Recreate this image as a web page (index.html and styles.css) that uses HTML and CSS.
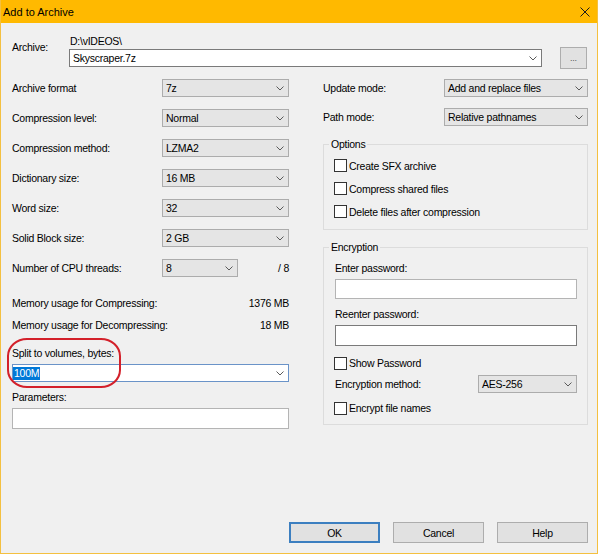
FILE: index.html
```html
<!DOCTYPE html>
<html>

<head>
    <title>Add to Archive</title>
    <link rel="stylesheet" href="styles.css">
</head>

<body>
    <div class="window">
        <div class="titleBar">
            <span class="titleText">Add to Archive</span>
            <svg class="closeIcon" width="10" height="10" viewBox="0 0 10 10">
                <path d="M0.5 0.5L9.5 9.5M9.5 0.5L0.5 9.5" stroke="#1a1a1a" stroke-width="1" fill="none" />
            </svg>
        </div>

        <div class="archiveRow">
            <div class="archiveLabel">Archive:</div>
            <div class="archiveFields">
                <div class="archivePath">D:\vIDEOS\</div>
                <div class="archiveInputRow">
                    <div class="combo editable archiveCombo">
                        <span class="comboText">Skyscraper.7z</span>
                        <svg class="chevron" width="8" height="5" viewBox="0 0 8 5"><path d="M0.5 0.5L4 4L7.5 0.5" /></svg>
                    </div>
                    <button class="winButton browseButton">...</button>
                </div>
            </div>
        </div>

        <div class="mainArea">
            <!-- Sol kolon -->
            <div class="leftColumn">
                <div class="formRow">
                    <span class="rowLabel">Archive format</span>
                    <div class="combo leftCombo"><span class="comboText">7z</span><svg class="chevron" width="8" height="5" viewBox="0 0 8 5"><path d="M0.5 0.5L4 4L7.5 0.5" /></svg></div>
                </div>
                <div class="formRow">
                    <span class="rowLabel">Compression level:</span>
                    <div class="combo leftCombo"><span class="comboText">Normal</span><svg class="chevron" width="8" height="5" viewBox="0 0 8 5"><path d="M0.5 0.5L4 4L7.5 0.5" /></svg></div>
                </div>
                <div class="formRow">
                    <span class="rowLabel">Compression method:</span>
                    <div class="combo leftCombo"><span class="comboText">LZMA2</span><svg class="chevron" width="8" height="5" viewBox="0 0 8 5"><path d="M0.5 0.5L4 4L7.5 0.5" /></svg></div>
                </div>
                <div class="formRow">
                    <span class="rowLabel">Dictionary size:</span>
                    <div class="combo leftCombo"><span class="comboText">16 MB</span><svg class="chevron" width="8" height="5" viewBox="0 0 8 5"><path d="M0.5 0.5L4 4L7.5 0.5" /></svg></div>
                </div>
                <div class="formRow">
                    <span class="rowLabel">Word size:</span>
                    <div class="combo leftCombo"><span class="comboText">32</span><svg class="chevron" width="8" height="5" viewBox="0 0 8 5"><path d="M0.5 0.5L4 4L7.5 0.5" /></svg></div>
                </div>
                <div class="formRow">
                    <span class="rowLabel">Solid Block size:</span>
                    <div class="combo leftCombo"><span class="comboText">2 GB</span><svg class="chevron" width="8" height="5" viewBox="0 0 8 5"><path d="M0.5 0.5L4 4L7.5 0.5" /></svg></div>
                </div>
                <div class="formRow">
                    <span class="rowLabel">Number of CPU threads:</span>
                    <div class="combo cpuCombo"><span class="comboText">8</span><svg class="chevron" width="8" height="5" viewBox="0 0 8 5"><path d="M0.5 0.5L4 4L7.5 0.5" /></svg></div>
                    <span class="cpuMax">/ 8</span>
                </div>

                <div class="memoryBlock">
                    <div class="memoryRow"><span>Memory usage for Compressing:</span><span>1376 MB</span></div>
                    <div class="memoryRow"><span>Memory usage for Decompressing:</span><span>18 MB</span></div>
                </div>

                <div class="splitBlock">
                    <div class="fieldLabel">Split to volumes, bytes:</div>
                    <div class="combo editable focused splitCombo">
                        <span class="selectedText">100M</span>
                        <svg class="chevron" width="8" height="5" viewBox="0 0 8 5"><path d="M0.5 0.5L4 4L7.5 0.5" /></svg>
                    </div>
                    <div class="redMark"></div>
                </div>

                <div class="fieldLabel paramsLabel">Parameters:</div>
                <input class="textField paramsField" type="text">
            </div>

            <!-- Sağ kolon -->
            <div class="rightColumn">
                <div class="formRow rightRow">
                    <span class="rightLabel">Update mode:</span>
                    <div class="combo rightCombo"><span class="comboText">Add and replace files</span><svg class="chevron" width="8" height="5" viewBox="0 0 8 5"><path d="M0.5 0.5L4 4L7.5 0.5" /></svg></div>
                </div>
                <div class="formRow rightRow pathRow">
                    <span class="rightLabel">Path mode:</span>
                    <div class="combo rightCombo"><span class="comboText">Relative pathnames</span><svg class="chevron" width="8" height="5" viewBox="0 0 8 5"><path d="M0.5 0.5L4 4L7.5 0.5" /></svg></div>
                </div>

                <div class="groupBox optionsGroup">
                    <div class="groupTitle">Options</div>
                    <div class="optionsList">
                        <div class="checkRow"><span class="checkBox"></span><span>Create SFX archive</span></div>
                        <div class="checkRow"><span class="checkBox"></span><span>Compress shared files</span></div>
                        <div class="checkRow"><span class="checkBox"></span><span>Delete files after compression</span></div>
                    </div>
                </div>

                <div class="groupBox encryptionGroup">
                    <div class="groupTitle">Encryption</div>
                    <div class="encryptionBody">
                        <div class="fieldLabel passLabel">Enter password:</div>
                        <input class="textField passField" type="password">
                        <div class="fieldLabel passLabel reenterLabel">Reenter password:</div>
                        <input class="textField passField hovered" type="password">
                        <div class="checkRow showRow"><span class="checkBox"></span><span>Show Password</span></div>
                        <div class="methodRow">
                            <span class="methodLabel">Encryption method:</span>
                            <div class="combo methodCombo"><span class="comboText">AES-256</span><svg class="chevron" width="8" height="5" viewBox="0 0 8 5"><path d="M0.5 0.5L4 4L7.5 0.5" /></svg></div>
                        </div>
                        <div class="checkRow namesRow"><span class="checkBox"></span><span>Encrypt file names</span></div>
                    </div>
                </div>
            </div>
        </div>

        <div class="footer">
            <button class="winButton dialogButton defaultButton">OK</button>
            <button class="winButton dialogButton">Cancel</button>
            <button class="winButton dialogButton">Help</button>
        </div>
    </div>
</body>

</html>
```

FILE: styles.css
```css
* {
    box-sizing: border-box;
}

body {
    margin: 0;
    background-color: #ffffff;
    font-family: "Liberation Sans", Arial, sans-serif;
    font-size: 10.5px;
    letter-spacing: -0.25px;
    color: #000000;
}

.window {
    width: 598px;
    height: 554px;
    display: flex;
    flex-direction: column;
    background-color: #f0f0f0;
    border: 1px solid #f4c040;
    border-top: none;
}

.titleBar {
    height: 23px;
    display: flex;
    align-items: center;
    justify-content: space-between;
    padding: 1px 7px 0 2px;
    background-color: #ffb900;
}

.titleText {
    font-size: 11px;
    letter-spacing: 0;
}

.archiveRow {
    display: flex;
    padding: 12px 0 0 11px;
}

.archiveLabel {
    width: 57px;
    margin-top: 6px;
    line-height: 12px;
}

.archivePath {
    line-height: 12px;
    padding-left: 1px;
}

.archiveInputRow {
    display: flex;
    align-items: center;
}

.combo {
    height: 18px;
    display: flex;
    align-items: center;
    padding: 0 4px 0 3px;
    background-color: #e5e5e5;
    border: 1px solid #acacac;
    white-space: nowrap;
}

.combo.editable {
    background-color: #ffffff;
    border-color: #7a7a7a;
}

.combo.focused {
    border-color: #6a93c8;
    padding-left: 0;
}

.chevron {
    margin-left: auto;
    flex-shrink: 0;
}

.chevron path {
    stroke: #5a5a5a;
    stroke-width: 1;
    fill: none;
}

.archiveCombo {
    width: 473px;
}

.winButton {
    font-family: inherit;
    font-size: inherit;
    letter-spacing: inherit;
    color: #000000;
    background-color: #e1e1e1;
    border: 1px solid #adadad;
    padding: 0;
}

.browseButton {
    width: 27px;
    height: 22px;
    margin-left: 18px;
    color: #555555;
    font-size: 9px;
}

.mainArea {
    display: flex;
    align-items: flex-start;
    padding-left: 11px;
    margin-top: 10px;
}

.leftColumn {
    width: 277px;
}

.formRow {
    display: flex;
    align-items: center;
    height: 18px;
    margin-bottom: 12px;
}

.rowLabel {
    width: 150px;
}

.leftCombo {
    width: 127px;
}

.cpuCombo {
    width: 76px;
}

.cpuMax {
    margin-left: auto;
}

.memoryBlock {
    margin-top: 15px;
}

.memoryRow {
    height: 22px;
    display: flex;
    align-items: center;
    justify-content: space-between;
}

.fieldLabel {
    line-height: 12px;
}

.splitBlock {
    position: relative;
    margin-top: 11px;
}

.splitCombo {
    margin-top: 5px;
}

.selectedText {
    line-height: 13px;
    padding: 0 1px;
    background-color: #0078d7;
    color: #ffffff;
}

.redMark {
    position: absolute;
    left: -5px;
    top: -9px;
    width: 114px;
    height: 50px;
    border: 2px solid #d3202a;
    border-radius: 20px / 18px;
}

.paramsLabel {
    margin-top: 9px;
}

.textField {
    display: block;
    margin: 0;
    padding: 0;
    background-color: #ffffff;
    border: 1px solid #b4b4b4;
    outline: none;
}

.paramsField {
    width: 277px;
    height: 21px;
    margin-top: 5px;
}

.rightColumn {
    width: 265px;
    margin-left: 34px;
}

.rightLabel {
    width: 121px;
}

.rightCombo {
    width: 144px;
}

.rightRow {
    margin-bottom: 11px;
}

.pathRow {
    margin-bottom: 0;
}

.groupBox {
    border: 1px solid #dcdcdc;
}

.groupTitle {
    width: fit-content;
    margin: -7px 0 0 5px;
    padding: 0 2px;
    line-height: 12px;
    background-color: #f0f0f0;
}

.optionsGroup {
    margin-top: 18px;
}

.optionsList {
    padding: 4px 0 6px 10px;
}

.checkRow {
    display: flex;
    align-items: center;
    height: 23px;
}

.checkBox {
    width: 13px;
    height: 13px;
    margin-right: 2px;
    background-color: #ffffff;
    border: 1px solid #333333;
}

.encryptionGroup {
    margin-top: 17px;
}

.encryptionBody {
    padding: 9px 10px 7px 11px;
}

.passField {
    width: 242px;
    height: 20px;
    margin-top: 5px;
}

.passField.hovered {
    height: 21px;
    border-color: #7a7a7a;
}

.reenterLabel {
    margin-top: 9px;
}

.showRow {
    height: 18px;
    margin: 8px 0 0 -1px;
}

.methodRow {
    display: flex;
    align-items: center;
    height: 18px;
    margin-top: 3px;
}

.methodLabel {
    width: 143px;
}

.methodCombo {
    width: 99px;
}

.namesRow {
    height: 18px;
    margin: 6px 0 0 -1px;
}

.footer {
    margin-top: auto;
    display: flex;
    justify-content: flex-end;
    gap: 13px;
    padding: 0 9px 10px 0;
}

.dialogButton {
    width: 91px;
    height: 21px;
}

.defaultButton {
    border: 2px solid #3c7fc0;
}
```
